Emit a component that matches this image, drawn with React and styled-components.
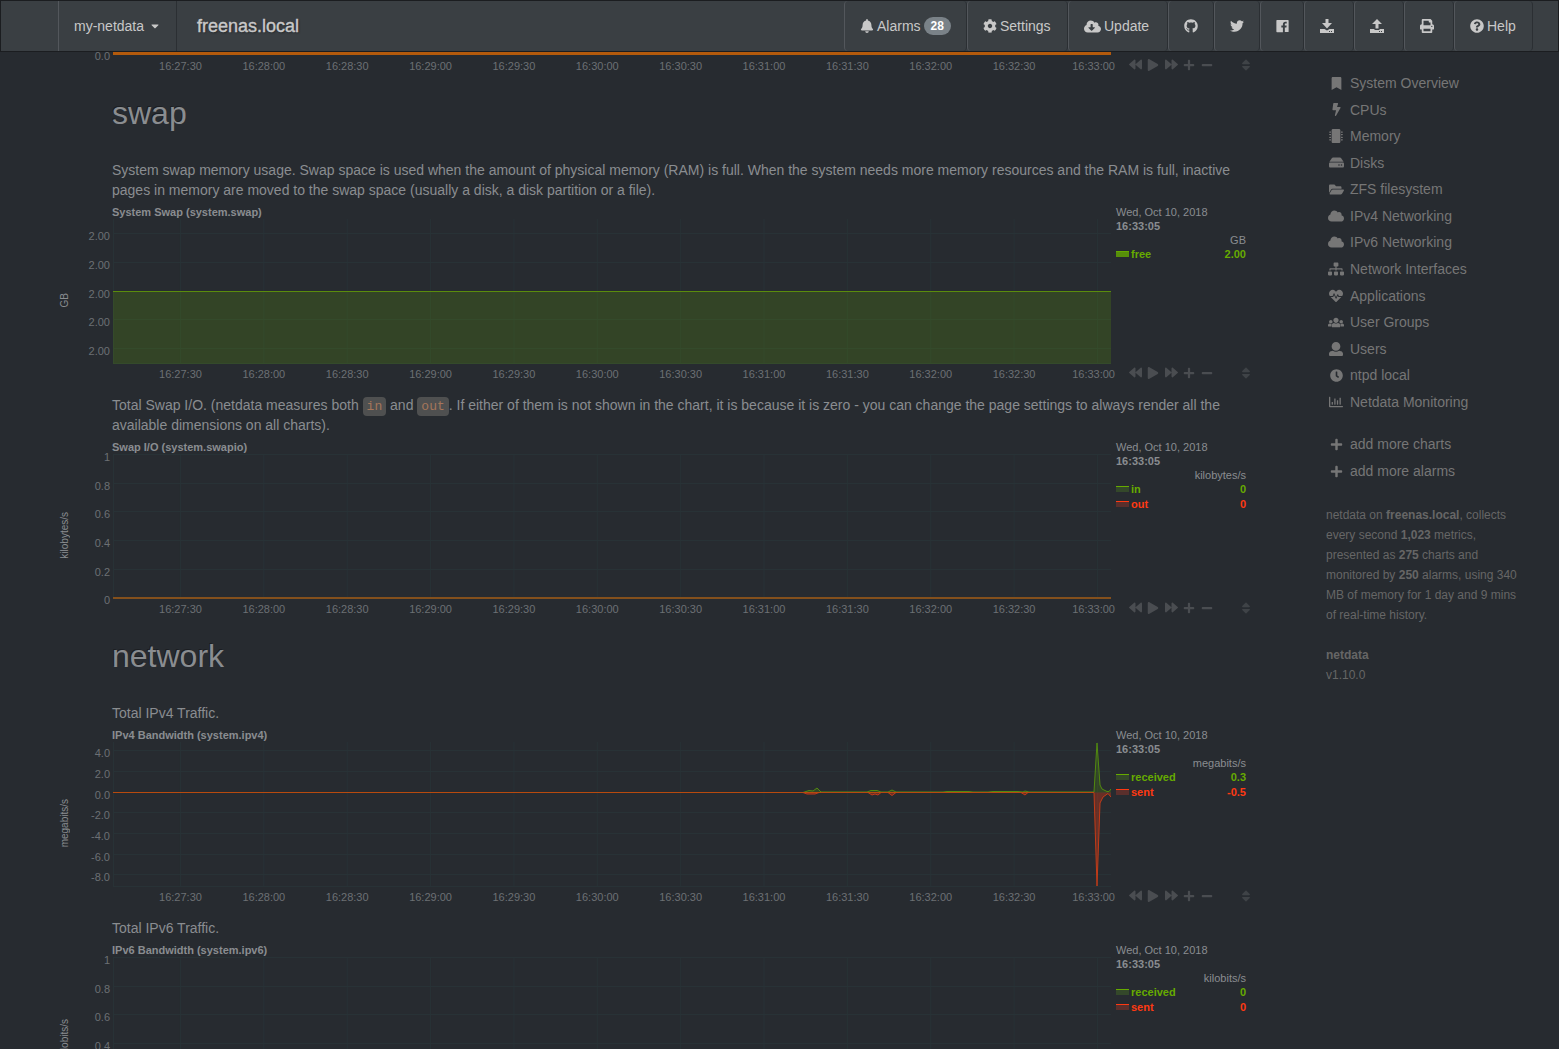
import React from "react";
import styled, { createGlobalStyle } from "styled-components";
import {
  FaBell, FaCog, FaCloudDownloadAlt, FaGithub, FaTwitter, FaPrint, FaQuestionCircle,
  FaBookmark, FaBolt, FaMicrochip, FaHdd, FaFolderOpen, FaCloud, FaSitemap, FaHeartbeat,
  FaClock, FaRegChartBar, FaPlus, FaMinus, FaBackward, FaForward, FaPlay, FaSort, FaCaretDown,
} from "react-icons/fa";

const GlobalStyle = createGlobalStyle`
  * { box-sizing: border-box; }
  body {
    margin: 0;
    background: #272b30;
    color: #8a8d90;
    font: 14px/20px "Liberation Sans", Arial, sans-serif;
  }
  button { font: inherit; color: inherit; background: none; border: 0; padding: 0; cursor: pointer; }
  a { color: inherit; text-decoration: none; }
  p, h1, h2, ul { margin: 0; padding: 0; }
  svg { display: block; }
`;

const Page = styled.div`
  height: 100vh;
  overflow: hidden;
  display: flex;
  flex-direction: column;
`;

const Navbar = styled.header`
  flex: none;
  display: flex;
  height: 52px;
  padding: 0 25px 0 57px;
  background: #3a3f43;
  border: 1px solid #1b1d20;
  color: #c8c8c8;
  text-shadow: 1px 1px 2px rgba(0, 0, 0, 0.4);
`;

const HostMenu = styled.button`
  display: flex;
  align-items: center;
  gap: 5px;
  padding: 0 15px;
  border-left: 1px solid #53575c;
  border-right: 1px solid #2b2f33;
  white-space: nowrap;
`;

const HostName = styled.h1`
  flex: 1;
  padding-left: 20px;
  font-size: 18px;
  font-weight: 400;
  line-height: 50px;
  -webkit-text-stroke: 0.4px;
`;

const NavList = styled.nav`
  display: flex;
`;

const NavItem = styled.button`
  display: flex;
  align-items: center;
  gap: 3px;
  min-width: ${(p) => p.$width}px;
  padding-left: 15px;
  border-left: 1px solid #53575c;
  border-right: 1px solid #2b2f33;
  border-radius: 4px;
`;

const Badge = styled.span`
  padding: 0 7px;
  border-radius: 10px;
  background: #7a8288;
  color: #fff;
  font-size: 12px;
  font-weight: 700;
  line-height: 18px;
`;

const Body = styled.div`
  display: flex;
  flex: 1;
  min-height: 0;
  gap: 80px;
  padding: 0 28px 0 58px;
`;

const Main = styled.main`
  flex: 1;
  min-width: 0;
`;

const Heading = styled.h2`
  margin: 8px 0 29px 54px;
  font-size: 32px;
  font-weight: 400;
  line-height: 36px;
  text-shadow: -1px -1px 0 rgba(0, 0, 0, 0.3);
`;

const Description = styled.p`
  margin: 0 6px 5px 54px;
`;

const Code = styled.code`
  padding: 2px 4px;
  border-radius: 4px;
  background: #4f5050;
  color: #a5765a;
  font: 13px "Liberation Mono", monospace;
`;

const ChartBlock = styled.section`
  display: grid;
  grid-template-columns: 55px minmax(0, 1fr) 135px;
  padding-bottom: 11px;
  font-size: 11px;
  line-height: 14px;
`;

const UnitLabel = styled.div`
  display: flex;
  align-items: center;
  padding: 11px 0 0 1px;
  font-size: 10px;
  line-height: 12px;
  span { writing-mode: vertical-rl; transform: rotate(180deg); }
`;

const ChartTitle = styled.h3`
  margin: 0 0 0 -1px;
  font-size: 11px;
  font-weight: 700;
  white-space: nowrap;
`;

const Plot = styled.svg`
  width: 100%;
  height: ${(p) => p.$height}px;
  overflow: visible;
  font-size: 11px;
  fill: #6c7074;
`;

const Side = styled.aside`
  display: flex;
  flex-direction: column;
  justify-content: space-between;
  padding-left: 5px;
`;

const LegendTime = styled.div`
  font-weight: ${(p) => (p.$bold ? 700 : 400)};
`;

const LegendUnit = styled.div`
  text-align: right;
`;

const LegendRow = styled.div`
  display: flex;
  align-items: center;
  gap: 2px;
  margin-bottom: 1px;
  color: ${(p) => p.$color};
  font-weight: 700;
  span:last-child { margin-left: auto; }
`;

const Swatch = styled.i`
  width: 13px;
  height: 6px;
  border-top: 1px solid ${(p) => p.$color};
  background: ${(p) => p.$fill};
`;

const Toolbox = styled.div`
  display: flex;
  align-items: center;
  height: 20px;
  padding: 0 0 3px 10px;
  color: #4a4d51;
`;

const ToolButton = styled.button`
  display: grid;
  place-items: center;
  width: 18px;
  height: 14px;
`;

const ResizeButton = styled(ToolButton)`
  width: 12px;
  margin: 0 -5px 0 auto;
  color: #3f4347;
`;

const Sidebar = styled.div`
  flex: none;
  width: 205px;
  padding-top: 18px;
  color: #767676;
`;

const Menu = styled.ul`
  display: flex;
  flex-direction: column;
  justify-content: space-between;
  height: ${(p) => p.$height}px;
  margin-bottom: ${(p) => p.$gap}px;
  list-style: none;
`;

const MenuLink = styled.a`
  display: flex;
  align-items: center;
  gap: 4px;
  line-height: 26px;
`;

const MenuIcon = styled.span`
  display: grid;
  place-items: center;
  width: 20px;
`;

const Info = styled.p`
  margin-bottom: 20px;
  color: #666;
  font-size: 12px;
  white-space: nowrap;
`;

const GREEN = "#66aa00";
const RED = "#fe3912";
const GRID = "#283236";

const Glyph = ({ box = "0 0 512 512", size = 14, width, d }) => (
  <svg viewBox={box} width={width || size} height={size} fill="currentColor" aria-hidden="true">
    <path d={d} />
  </svg>
);

const FacebookIcon = () => (
  <Glyph box="0 0 448 512" width={13} d="M448 56.7v398.5c0 13.7-11.1 24.7-24.7 24.7H309.1V306.5h58.2l8.7-67.6h-67v-43.2c0-19.6 5.4-32.9 33.5-32.9h35.8v-60.5c-6.2-.8-27.4-2.7-52.2-2.7-51.6 0-87 31.5-87 89.4v49.9h-58.4v67.6h58.4V480H24.7C11.1 480 0 468.9 0 455.3V56.7C0 43.1 11.1 32 24.7 32h398.5c13.7 0 24.8 11.1 24.8 24.7z" />
);
const ImportIcon = () => (
  <Glyph box="0 0 14 14" d="M5.5 0h3v4H12L7 9.5 2 4h3.5zM0 10h4.5L7 11.5 9.5 10H14v4H0zM9 12v1h1v-1zM11 12v1h1v-1z" />
);
const ExportIcon = () => (
  <Glyph box="0 0 14 14" d="M5.5 9.5h3V5H12L7 0 2 5h3.5zM0 10h4.5v1h5v-1H14v4H0zM9 12v1h1v-1zM11 12v1h1v-1z" />
);
const UserIcon = () => (
  <Glyph d="M256 0c88.366 0 160 71.634 160 160s-71.634 160-160 160S96 248.366 96 160 167.634 0 256 0zm183.283 333.821l-71.313-17.828c-74.923 53.89-165.738 41.864-223.94 0l-71.313 17.828C29.981 344.505 0 382.903 0 426.955V464c0 26.51 21.49 48 48 48h416c26.51 0 48-21.49 48-48v-37.045c0-44.052-29.981-82.45-72.717-93.134z" />
);
const UsersIcon = () => (
  <Glyph box="0 0 640 512" width={16} size={13} d="M320 64c57.99 0 105 47.01 105 105s-47.01 105-105 105-105-47.01-105-105S262.01 64 320 64zm113.463 217.366l-39.982-9.996c-49.168 35.365-108.766 27.473-146.961 0l-39.982 9.996C174.484 289.379 152 318.177 152 351.216V412c0 19.882 16.118 36 36 36h264c19.882 0 36-16.118 36-36v-60.784c0-33.039-22.484-61.837-54.537-69.85zM528 300c38.66 0 70-31.34 70-70s-31.34-70-70-70-70 31.34-70 70 31.34 70 70 70zm-416 0c38.66 0 70-31.34 70-70s-31.34-70-70-70-70 31.34-70 70 31.34 70 70 70zm24 112v-60.784c0-16.551 4.593-32.204 12.703-45.599-29.988 14.72-63.336 8.708-85.69-7.37l-26.655 6.664C14.99 310.252 0 329.452 0 351.477V392c0 13.255 10.745 24 24 24h112.169a52.417 52.417 0 0 1-.169-4zm467.642-107.09l-26.655-6.664c-27.925 20.086-60.89 19.233-85.786 7.218C499.369 318.893 504 334.601 504 351.216V412c0 1.347-.068 2.678-.169 4H616c13.255 0 24-10.745 24-24v-40.523c0-22.025-14.99-41.225-36.358-46.567z" />
);

const TIMES = ["16:27:30", "16:28:00", "16:28:30", "16:29:00", "16:29:30", "16:30:00", "16:30:30", "16:31:00", "16:31:30", "16:32:00", "16:32:30", "16:33:00"];
const timeX = (i) => `${6.76 + i * 8.353}%`;

const TENTHS = [["1", 0.5], ["0.8", 29.5], ["0.6", 57.5], ["0.4", 86.5], ["0.2", 115.5], ["0", 143.5]];

function ChartTools() {
  return (
    <Toolbox>
      <ToolButton aria-label="Pan backward"><FaBackward size={13} /></ToolButton>
      <ToolButton aria-label="Play"><FaPlay size={12} /></ToolButton>
      <ToolButton aria-label="Pan forward"><FaForward size={13} /></ToolButton>
      <ToolButton aria-label="Zoom in"><FaPlus size={12} /></ToolButton>
      <ToolButton aria-label="Zoom out"><FaMinus size={12} /></ToolButton>
      <ResizeButton aria-label="Resize chart"><FaSort size={14} /></ResizeButton>
    </Toolbox>
  );
}

function Chart({ title, unit, ticks, legend, height = 145, children }) {
  return (
    <ChartBlock>
      <UnitLabel>{unit && <span>{unit}</span>}</UnitLabel>
      <div>
        {title && <ChartTitle>{title}</ChartTitle>}
        <Plot $height={height}>
          {height > 20 && TIMES.map((t, i) => (
            <line key={t} x1={timeX(i)} x2={timeX(i)} y1="0" y2={height} stroke={GRID} />
          ))}
          {height > 20 && <line x1="0.5" x2="0.5" y1="0" y2={height} stroke={GRID} />}
          {ticks.map(([label, y]) => (
            <g key={y}>
              <line x1="0" x2="100%" y1={y} y2={y} stroke={GRID} />
              <text x="-3" y={y + 6} textAnchor="end">{label}</text>
            </g>
          ))}
          {height > 20 && <line x1="0" x2="100%" y1={height - 0.5} y2={height - 0.5} stroke={GRID} />}
          <svg width="100%" height={height} viewBox={`0 0 998 ${height}`} preserveAspectRatio="none">
            {children}
          </svg>
        </Plot>
        <Plot $height={20}>
          {TIMES.map((t, i) =>
            i === TIMES.length - 1
              ? <text key={t} x="100%" dx="4" y="14" textAnchor="end">{t}</text>
              : <text key={t} x={timeX(i)} y="14" textAnchor="middle">{t}</text>
          )}
        </Plot>
      </div>
      <Side>
        <div>
          {legend && (
            <>
              <LegendTime>Wed, Oct 10, 2018</LegendTime>
              <LegendTime $bold>16:33:05</LegendTime>
              <LegendUnit>{unit}</LegendUnit>
              {legend.map((row) => (
                <LegendRow key={row.name} $color={row.color}>
                  <Swatch $color={row.color} $fill={row.fill} />
                  <span>{row.name}</span>
                  <span>{row.value}</span>
                </LegendRow>
              ))}
            </>
          )}
        </div>
        <ChartTools />
      </Side>
    </ChartBlock>
  );
}

const series = (a, b, v1, v2) => [
  { name: a, value: v1, color: GREEN, fill: "#34482a" },
  { name: b, value: v2, color: RED, fill: "#5a2f2c" },
];

const MENU = [
  [<FaBookmark size={13} />, "System Overview"],
  [<FaBolt size={13} />, "CPUs"],
  [<FaMicrochip size={14} />, "Memory"],
  [<FaHdd size={15} />, "Disks"],
  [<FaFolderOpen size={15} />, "ZFS filesystem"],
  [<FaCloud size={16} />, "IPv4 Networking"],
  [<FaCloud size={16} />, "IPv6 Networking"],
  [<FaSitemap size={16} />, "Network Interfaces"],
  [<FaHeartbeat size={14} />, "Applications"],
  [<UsersIcon />, "User Groups"],
  [<UserIcon />, "Users"],
  [<FaClock size={13} />, "ntpd local"],
  [<FaRegChartBar size={14} />, "Netdata Monitoring"],
];

const MORE = [
  [<FaPlus size={13} />, "add more charts"],
  [<FaPlus size={13} />, "add more alarms"],
];

const MenuItems = ({ items, height, gap }) => (
  <Menu $height={height} $gap={gap}>
    {items.map(([icon, label]) => (
      <li key={label}>
        <MenuLink href="#"><MenuIcon>{icon}</MenuIcon>{label}</MenuLink>
      </li>
    ))}
  </Menu>
);

const RECEIVED = "M0 50.5H690L696 48.5L700 49L704 46L708 50H754L758 48.5H764L768 50H775L779 48L783 50H830L834 49.5H856L860 50H875L880 49.5H905L910 50L912 49L916 50H981L984 1L987 43L989 47L994 49.5H996L998 47";
const SENT = "M0 50.5H690L694 52H702L706 50.5H755L759 53L762 52L765 53L768 50.5H775L779 53.5L783 50.5H908L912 53L915 50.5H981L984 144L987 61L990 55L995 51.5L998 55";

export default function App() {
  return (
    <Page>
      <GlobalStyle />
      <Navbar>
        <HostMenu>my-netdata <FaCaretDown size={12} /></HostMenu>
        <HostName>freenas.local</HostName>
        <NavList>
          <NavItem $width={123}><FaBell size={14} />Alarms <Badge>28</Badge></NavItem>
          <NavItem $width={101}><FaCog size={14} />Settings</NavItem>
          <NavItem $width={100}><FaCloudDownloadAlt size={17} />Update</NavItem>
          <NavItem $width={46} aria-label="GitHub"><FaGithub size={14} /></NavItem>
          <NavItem $width={46} aria-label="Twitter"><FaTwitter size={14} /></NavItem>
          <NavItem $width={44} aria-label="Facebook"><FacebookIcon /></NavItem>
          <NavItem $width={50} aria-label="Import snapshot"><ImportIcon /></NavItem>
          <NavItem $width={50} aria-label="Export snapshot"><ExportIcon /></NavItem>
          <NavItem $width={50} aria-label="Print"><FaPrint size={14} /></NavItem>
          <NavItem $width={79}><FaQuestionCircle size={14} />Help</NavItem>
        </NavList>
      </Navbar>
      <Body>
        <Main>
          <Chart height={4} ticks={[["0.0", 2]]}>
            <rect width="998" height="3" fill="#b35a0c" />
          </Chart>

          <Heading>swap</Heading>
          <Description>
            System swap memory usage. Swap space is used when the amount of physical memory (RAM) is full. When the system needs more memory resources and the RAM is full, inactive pages in memory are moved to the swap space (usually a disk, a disk partition or a file).
          </Description>
          <Chart
            title="System Swap (system.swap)"
            unit="GB"
            ticks={[["2.00", 14.5], ["2.00", 43.5], ["2.00", 72.5], ["2.00", 100.5], ["2.00", 129.5]]}
            legend={[{ name: "free", value: "2.00", color: GREEN, fill: "#578f0a" }]}
          >
            <rect y="72" width="998" height="73" fill={GREEN} fillOpacity="0.2" />
            <rect y="72" width="998" height="1" fill="#5b8c0c" />
          </Chart>

          <Description>
            Total Swap I/O. (netdata measures both <Code>in</Code> and <Code>out</Code>. If either of them is not shown in the chart, it is because it is zero - you can change the page settings to always render all the available dimensions on all charts).
          </Description>
          <Chart title="Swap I/O (system.swapio)" unit="kilobytes/s" ticks={TENTHS} legend={series("in", "out", "0", "0")}>
            <rect y="143" width="998" height="2" fill="#84501c" />
          </Chart>

          <Heading>network</Heading>
          <Description>Total IPv4 Traffic.</Description>
          <Chart
            title="IPv4 Bandwidth (system.ipv4)"
            unit="megabits/s"
            ticks={[["4.0", 8.5], ["2.0", 29.5], ["0.0", 50.5], ["-2.0", 70.5], ["-4.0", 91.5], ["-6.0", 112.5], ["-8.0", 132.5]]}
            legend={series("received", "sent", "0.3", "-0.5")}
          >
            <path d={`${RECEIVED}V50.5H0Z`} fill={GREEN} fillOpacity="0.2" />
            <path d={`${SENT}V50.5H0Z`} fill={RED} fillOpacity="0.3" />
            <path d={RECEIVED} fill="none" stroke="#528a10" vectorEffect="non-scaling-stroke" />
            <path d={SENT} fill="none" stroke="#c23b18" vectorEffect="non-scaling-stroke" />
            <rect y="50" width="981" height="1" fill="#b84a0e" />
          </Chart>

          <Description>Total IPv6 Traffic.</Description>
          <Chart title="IPv6 Bandwidth (system.ipv6)" unit="kilobits/s" ticks={TENTHS} legend={series("received", "sent", "0", "0")} />
        </Main>

        <Sidebar>
          <MenuItems items={MENU} height={345} gap={16} />
          <MenuItems items={MORE} height={53} gap={21} />
          <Info>
            netdata on <b>freenas.local</b>, collects<br />
            every second <b>1,023</b> metrics,<br />
            presented as <b>275</b> charts and<br />
            monitored by <b>250</b> alarms, using 340<br />
            MB of memory for 1 day and 9 mins<br />
            of real-time history.
          </Info>
          <Info><b>netdata</b><br />v1.10.0</Info>
        </Sidebar>
      </Body>
    </Page>
  );
}
